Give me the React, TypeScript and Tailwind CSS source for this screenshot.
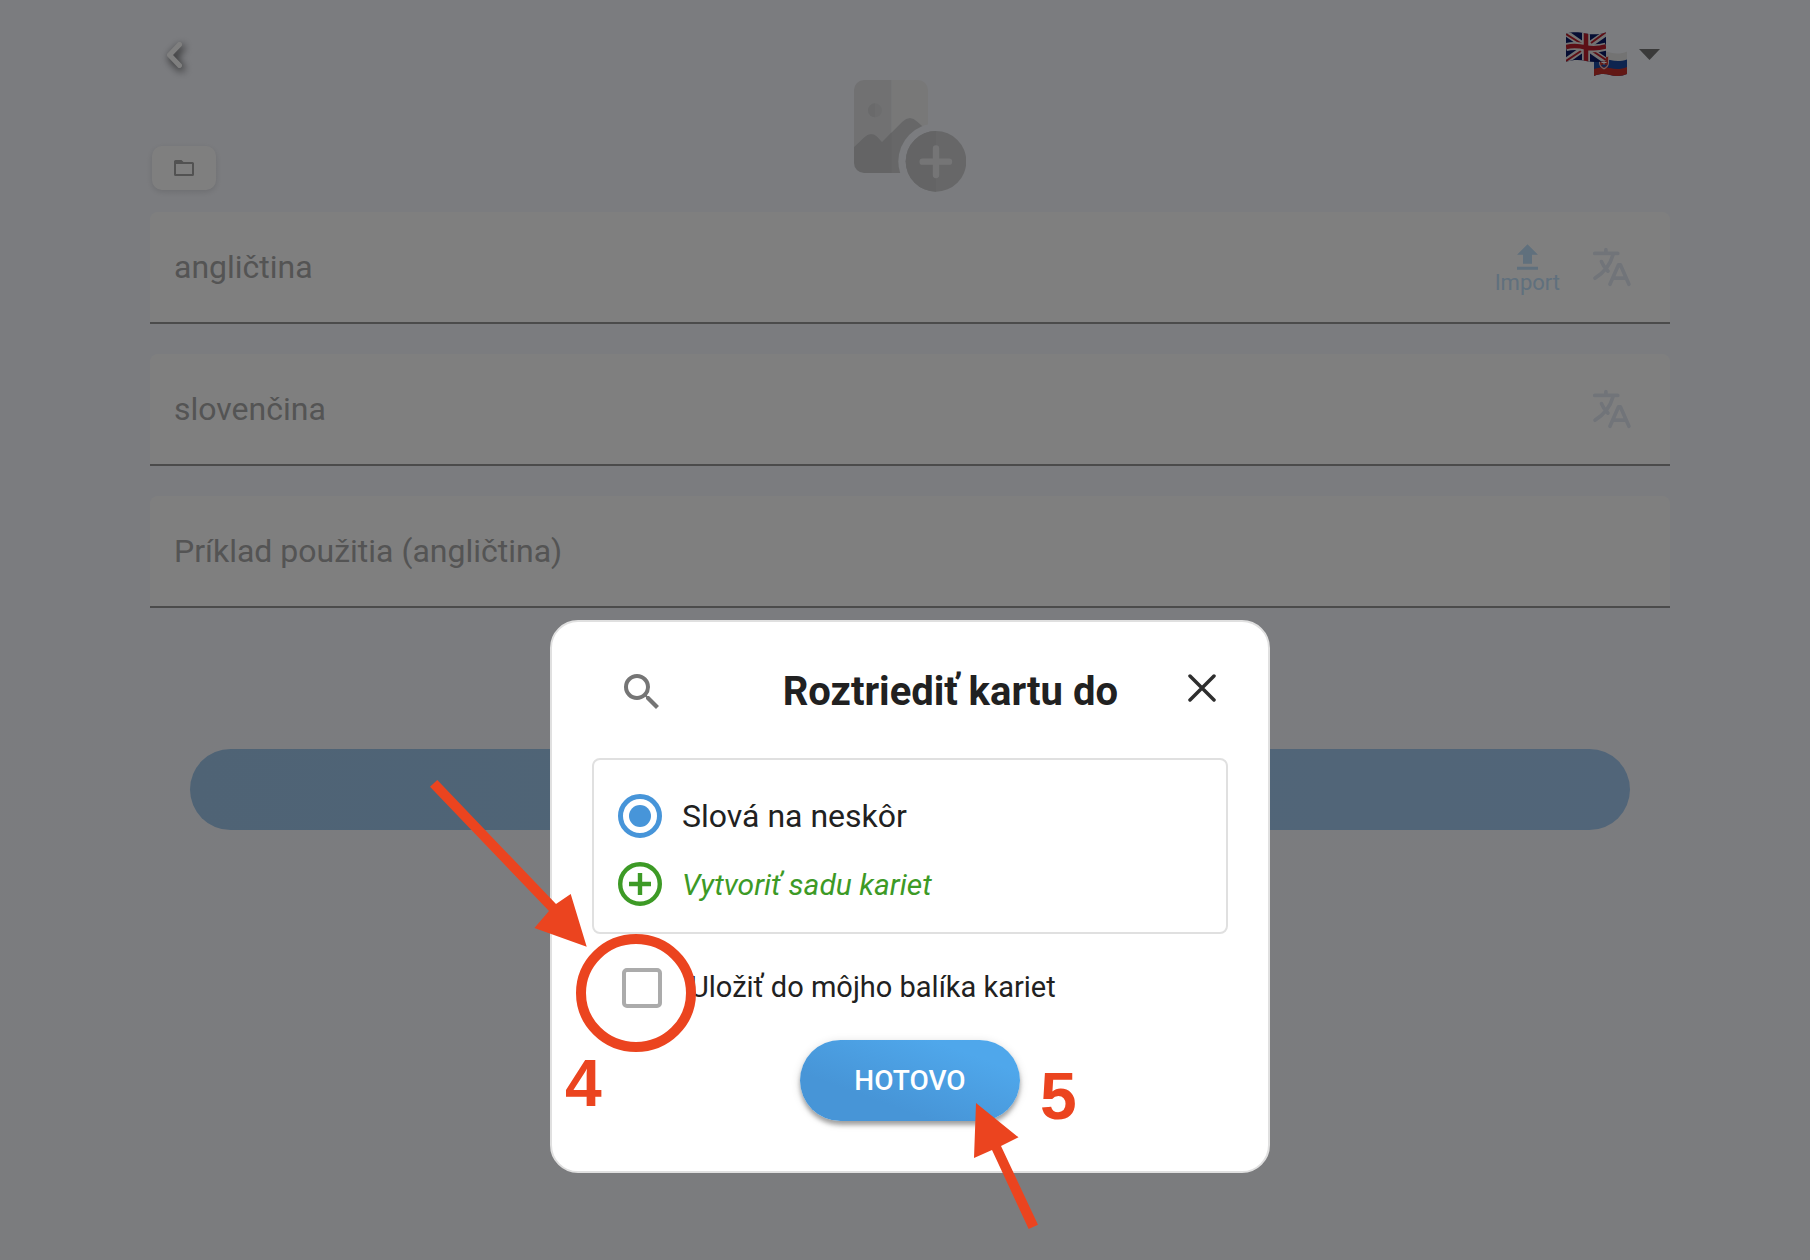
import React, { useState } from "react";

interface FieldProps {
  label: string;
  name: string;
  withImport?: boolean;
  withTranslate?: boolean;
}

const ChevronLeftIcon: React.FC = () => (
  <svg
    viewBox="0 0 24 32"
    className="w-6 h-8 drop-shadow-[2px_3px_4px_rgba(0,0,0,0.8)]"
    fill="none"
    stroke="#ffffff"
    strokeWidth="5"
    strokeLinecap="round"
    strokeLinejoin="round"
  >
    <path d="M15.500 5.500 5.500 16l10 10.500" />
  </svg>
);

const FolderIcon: React.FC = () => (
  <svg viewBox="0 0 20 16" className="w-5 h-4" fill="#a4a4a4">
    <path
      fillRule="evenodd"
      d="M1.500 0H7.500L9.500 2H18.500A1.500 1.500 0 0 1 20 3.500V14.500A1.500 1.500 0 0 1 18.500 16H1.500A1.500 1.500 0 0 1 0 14.500V1.500A1.500 1.500 0 0 1 1.500 0ZM2 4V14H18V4Z"
    />
  </svg>
);

const AddImageIcon: React.FC = () => (
  <svg viewBox="102 60 336 336" className="w-28 h-28">
    <defs>
      <clipPath id="photo">
        <rect x="102" y="60" width="222" height="279" rx="30" />
      </clipPath>
      <mask id="cutout">
        <rect x="102" y="60" width="336" height="336" fill="#fff" />
        <circle cx="348" cy="304" r="113" fill="#000" />
      </mask>
    </defs>
    <g clipPath="url(#photo)" mask="url(#cutout)">
      <rect x="102" y="60" width="113" height="279" fill="#e2e3e5" />
      <rect x="215" y="60" width="113" height="279" fill="#f0f0f1" />
      <path
        d="M102 262 132 233Q152 214 171 230L186 247 247 185Q270 163 292 185L324 214V339H102Z"
        fill="#cecfd1"
      />
      <path d="M102 262 132 233Q152 214 171 230L186 247 215 217V339H102Z" fill="#c8c9cb" />
      <circle cx="165" cy="151" r="21" fill="#dadbdd" />
      <path d="M165 130a21 21 0 0 0 0 42z" fill="#d4d5d7" />
    </g>
    <circle cx="348" cy="304" r="91" fill="#cecfd1" />
    <path d="M348 213a91 91 0 0 0 0 182z" fill="#c8c9cb" />
    <path
      d="M348 265V345M308 305H387"
      stroke="#ebebed"
      strokeWidth="19"
      strokeLinecap="round"
    />
  </svg>
);

const FlagsIcon: React.FC = () => (
  <svg viewBox="0 0 62 44" className="w-[62px] h-11">
    <defs>
      <clipPath id="uk">
        <path d="M0 1.500C7-.5 13 0 20 1.500 27 3 33 2.500 40 .5V28.500C33 30.500 27 30.500 20 29 13 27.500 7 27.500 0 30Z" />
      </clipPath>
      <clipPath id="sk">
        <path d="M28 21C34 18.500 39 19 44 20.500 50 22 55 22 61 19.500V42C55 44.500 50 44.500 44 43 39 41.500 34 41.500 28 44Z" />
      </clipPath>
    </defs>
    <g clipPath="url(#sk)">
      <rect x="28" y="18" width="34" height="27" fill="#e6e6e6" />
      <path d="M28 28.500C34 26.500 39 26.500 44 28 50 29.500 55 29.500 61 27.500V46H28Z" fill="#1c489f" />
      <path d="M28 37C34 35 39 34.500 44 36 50 37.500 55 37.500 61 35V46H28Z" fill="#c5312a" />
      <path d="M33 24h10v7c0 3-2 5-5 6.500-3-1.500-5-3.500-5-6.500z" fill="#e6c9c9" />
      <path d="M34 25h8v6c0 2.500-2 4-4 5-2-1-4-2.500-4-5z" fill="#c9352c" />
      <path d="M38 26v7M36 28h4M35.500 30.500h5" stroke="#ffffff" strokeWidth="1" />
      <path d="M35 33.500c1-1.500 5-1.500 6 0l-3 2z" fill="#1c489f" />
    </g>
    <g clipPath="url(#uk)">
      <rect width="40" height="31" fill="#0a1a66" />
      <path d="M0 1 40 29M40 1 0 29" stroke="#e6e6e6" strokeWidth="6" />
      <path d="M0 2 16 12M25 18 40 28M40 0 25 11M15 19 0 29" stroke="#b81f2c" strokeWidth="2" />
      <path d="M20 0V31M0 15C8 13 14 14 20 15.500 27 17 33 16.500 40 14.500" stroke="#e6e6e6" strokeWidth="8" fill="none" />
      <path d="M20 0V31M0 15C8 13 14 14 20 15.500 27 17 33 16.500 40 14.500" stroke="#b81f2c" strokeWidth="4.500" fill="none" />
    </g>
  </svg>
);

const TranslateIcon: React.FC = () => (
  <svg
    viewBox="366 714 118 118"
    className="w-10 h-10"
    fill="none"
    stroke="#e3e9f3"
    strokeWidth="11"
    strokeLinecap="round"
    strokeLinejoin="round"
  >
    <path d="M374 733H442M407 722V731M428 737C420 766 404 788 375 806M394 757C398 768 405 777 413 785" />
    <path d="M419 824 444 767H450L475 824M428 806H466" />
  </svg>
);

const UploadIcon: React.FC = () => (
  <svg viewBox="5 3 14 17" className="w-[21px] h-[26px]" fill="#c0e0fa">
    <path d="M5 20h14v-2H5v2zm4-4h6v-6h4l-7-7-7 7h4v6z" />
  </svg>
);

const Field: React.FC<FieldProps> = ({ label, name, withImport, withTranslate }) => (
  <div className="flex items-center h-28 pl-6 pr-[38px] bg-white border-b-2 border-[#969696] rounded-t-lg">
    <input
      id={name}
      name={name}
      aria-label={label}
      placeholder={label}
      className="flex-1 min-w-0 h-full bg-transparent text-[32px] placeholder:text-[#a8a8a8] outline-none"
    />
    {withImport && (
      <button className="flex flex-col items-center pt-1.5 mr-8 text-[22px] leading-[26px] text-[#c0e0fa]">
        <UploadIcon />
        Import
      </button>
    )}
    {withTranslate && (
      <button aria-label="Preložiť">
        <TranslateIcon />
      </button>
    )}
  </div>
);

// arrows and the ring are drawn in the dialog's own coordinates
const Annotations: React.FC = () => (
  <div className="absolute -left-0.5 -top-0.5 pointer-events-none font-['Liberation_Sans',sans-serif] font-bold text-[66px] leading-none text-[#eb441f]">
    <svg width="720" height="553" viewBox="0 0 720 553" className="overflow-visible" fill="#eb441f">
      <path d="M-112.700 160 6 284 20.700 274 36.700 326.700-15.600 308-1 291-120 166.700Z" />
      <ellipse cx="86" cy="373" rx="55" ry="54" fill="none" stroke="#eb441f" strokeWidth="10" />
      <path d="M426 483 468.500 517.300 451 526 488 604.700 478.700 609 442 530 424 538Z" />
    </svg>
    <span className="absolute left-[15px] top-[430px]">4</span>
    <span className="absolute left-[490px] top-[443px]">5</span>
  </div>
);

const SortCardDialog: React.FC<{ onClose: () => void }> = ({ onClose }) => {
  const [saved, setSaved] = useState(false);
  return (
    <div className="fixed inset-0 flex items-end justify-center pl-[10px] pb-[87px] bg-black/50">
      <section
        role="dialog"
        aria-labelledby="dialog-title"
        className="relative w-[720px] px-10 pb-[50px] bg-white border-2 border-[#e0e0e0] rounded-[28px] text-[#212121]"
      >
        <header className="flex items-center pt-[46px] pb-[42px] pl-[26px] pr-3">
          <button aria-label="Hľadať">
            <svg viewBox="0 0 24 24" className="w-12 h-12" fill="#757575">
              <path d="M15.500 14h-.79l-.28-.27A6.471 6.471 0 0 0 16 9.500 6.500 6.500 0 1 0 9.500 16c1.610 0 3.090-.59 4.230-1.570l.27.28v.79l5 4.990L20.490 19l-4.990-5zm-6 0C7.010 14 5 11.990 5 9.500S7.010 5 9.500 5 14 7.010 14 9.500 11.990 14 9.500 14z" />
            </svg>
          </button>
          <h2 id="dialog-title" className="flex-1 text-right text-[40px] leading-[48px] font-bold">
            Roztriediť kartu do
          </h2>
          <button aria-label="Zavrieť" className="ml-[70px] pb-2" onClick={onClose}>
            <svg
              viewBox="0 0 28 28"
              className="w-7 h-7"
              fill="none"
              stroke="#2e2e2e"
              strokeWidth="3.500"
              strokeLinecap="round"
            >
              <path d="M2 2 26 26M26 2 2 26" />
            </svg>
          </button>
        </header>
        <div className="pt-[22px] pb-[14px] px-6 border-2 border-[#e0e0e0] rounded-lg">
          <label className="flex items-center gap-5 h-[68px] text-[32px]">
            <input
              type="radio"
              name="set"
              defaultChecked
              className="appearance-none w-11 h-11 rounded-full border-[5px] border-[#4795d9] p-[6px] bg-clip-content checked:bg-[#4795d9]"
            />
            Slová na neskôr
          </label>
          <button className="flex items-center gap-5 h-[68px] text-[30px] italic text-[#3d9a26]">
            <svg viewBox="0 0 44 44" className="w-11 h-11" fill="none" stroke="#3d9a26" strokeWidth="4.400">
              <circle cx="22" cy="22" r="19.800" />
              <path d="M22 11V33M11 22H33" />
            </svg>
            Vytvoriť sadu kariet
          </button>
        </div>
        <label className="flex items-center gap-7 h-[106px] pt-0.5 pl-[30px] text-[29px]">
          <input
            type="checkbox"
            checked={saved}
            onChange={(e) => setSaved(e.target.checked)}
            className="appearance-none w-10 h-10 border-4 border-[#ababab] rounded-[5px] checked:bg-[#4795d9]"
          />
          Uložiť do môjho balíka kariet
        </label>
        <button
          className="block w-[220px] h-[81px] mx-auto rounded-full bg-linear-to-tr from-[#4795d7] from-30% to-[#4fa7eb] to-80% text-[28px] font-medium text-white shadow-[0_4px_4px_rgba(0,0,0,0.3),0_2px_10px_rgba(0,0,0,0.15)]"
          onClick={onClose}
        >
          HOTOVO
        </button>
        <Annotations />
      </section>
    </div>
  );
};

export default function App() {
  const [dialogOpen, setDialogOpen] = useState(true);
  return (
    <div className="min-h-screen pl-[150px] pr-[140px] bg-linear-to-b from-[#f7f9ff] to-[#f7f8fd] font-[Roboto,sans-serif]">
      <header className="grid grid-cols-[1fr_112px_1fr] pb-5">
        <div className="flex flex-col items-start justify-between pt-[39px] pb-0.5">
          <button aria-label="Späť" className="ml-[14px]">
            <ChevronLeftIcon />
          </button>
          <button
            aria-label="Priečinok"
            className="flex items-center justify-center w-16 h-11 ml-[2px] rounded-[10px] bg-white shadow-[0_2px_6px_rgba(0,0,0,0.12)]"
          >
            <FolderIcon />
          </button>
        </div>
        <button aria-label="Pridať obrázok" className="pt-20">
          <AddImageIcon />
        </button>
        <button aria-label="Jazyky" className="flex items-center gap-[11px] self-start justify-self-end pt-8 pr-[10px]">
          <FlagsIcon />
          <svg viewBox="0 0 21 11" className="w-[21px] h-[11px]" fill="#747474">
            <path d="M0 0h21L10.500 11z" />
          </svg>
        </button>
      </header>
      <form className="flex flex-col gap-[30px]" onSubmit={(e) => e.preventDefault()}>
        <Field name="source" label="angličtina" withImport withTranslate />
        <Field name="target" label="slovenčina" withTranslate />
        <Field name="example" label="Príklad použitia (angličtina)" />
        <button
          aria-label="Uložiť"
          className="h-[81px] mt-[111px] mx-10 rounded-full bg-linear-to-r from-[#9ec7eb] to-[#a3cbf2]"
          onClick={() => setDialogOpen(true)}
        />
      </form>
      {dialogOpen && <SortCardDialog onClose={() => setDialogOpen(false)} />}
    </div>
  );
}
